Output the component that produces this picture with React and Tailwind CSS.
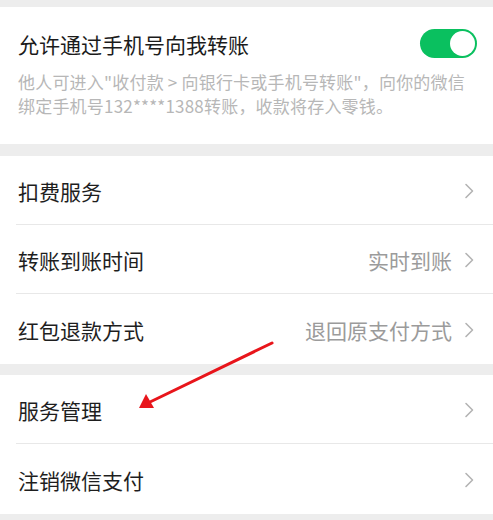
const font = { fontFamily: '"Noto Sans CJK SC", "Noto Sans", sans-serif' }

function Chevron() {
  return (
    <svg width="11" height="16" viewBox="0 0 11 16" className="shrink-0">
      <path d="M2 1.5 L8.5 8 L2 14.5" fill="none" stroke="#b4b4b4" strokeWidth="1.6" strokeLinecap="round" strokeLinejoin="round" />
    </svg>
  )
}

function Row({ label, value, last }) {
  return (
    <div className="pl-[16px]">
      <div className={`flex items-center h-[69px] pr-[18px] pt-[2px] ${last ? '' : 'border-b border-[#e8e8e8]'}`}>
        <span className="pl-[2px] text-[21px] leading-[28px] text-[#1e1e1e]">{label}</span>
        <div className="ml-auto flex items-center gap-[12px]">
          {value && <span className="text-[21px] leading-[28px] text-[#9b9b9b]">{value}</span>}
          <Chevron />
        </div>
      </div>
      {last && <div className="h-[1px]" />}
    </div>
  )
}

export default function App() {
  return (
    <div className="relative w-[493px] h-[520px] overflow-hidden bg-[#ededed] pt-[7px]" style={font}>
      {/* toggle section */}
      <div className="bg-white pl-[18px] pr-[16px] pt-[22px] pb-[26px]">
        <div className="flex items-center h-[29px]">
          <span className="text-[21px] leading-[28px] text-[#1b1b1b]">允许通过手机号向我转账</span>
          <div className="ml-auto w-[57px] h-[29px] rounded-full bg-[#0ac05f] flex items-center justify-end p-[2px]">
            <div className="w-[25px] h-[25px] rounded-full bg-white" />
          </div>
        </div>
        <div className="mt-[12px] text-[17px] leading-[24px] text-[#b7b7b7] whitespace-nowrap tracking-[0.2px]">
          <div>他人可进入"收付款 &gt; 向银行卡或手机号转账"，向你的微信</div>
          <div>绑定手机号132****1388转账，收款将存入零钱。</div>
        </div>
      </div>

      <div className="mt-[12px] bg-white">
        <Row label="扣费服务" />
        <Row label="转账到账时间" value="实时到账" />
        <Row label="红包退款方式" value="退回原支付方式" last />
      </div>

      <div className="mt-[11px] bg-white">
        <Row label="服务管理" />
        <Row label="注销微信支付" last />
      </div>

      {/* annotation arrow */}
      <svg className="absolute left-0 top-0 pointer-events-none" width="493" height="520" viewBox="0 0 493 520">
        <line x1="272" y1="343" x2="150" y2="402" stroke="#e8151b" strokeWidth="3" strokeLinecap="round" />
        <polygon points="139,408 146,394 154,408" fill="#e8151b" />
      </svg>
    </div>
  )
}
